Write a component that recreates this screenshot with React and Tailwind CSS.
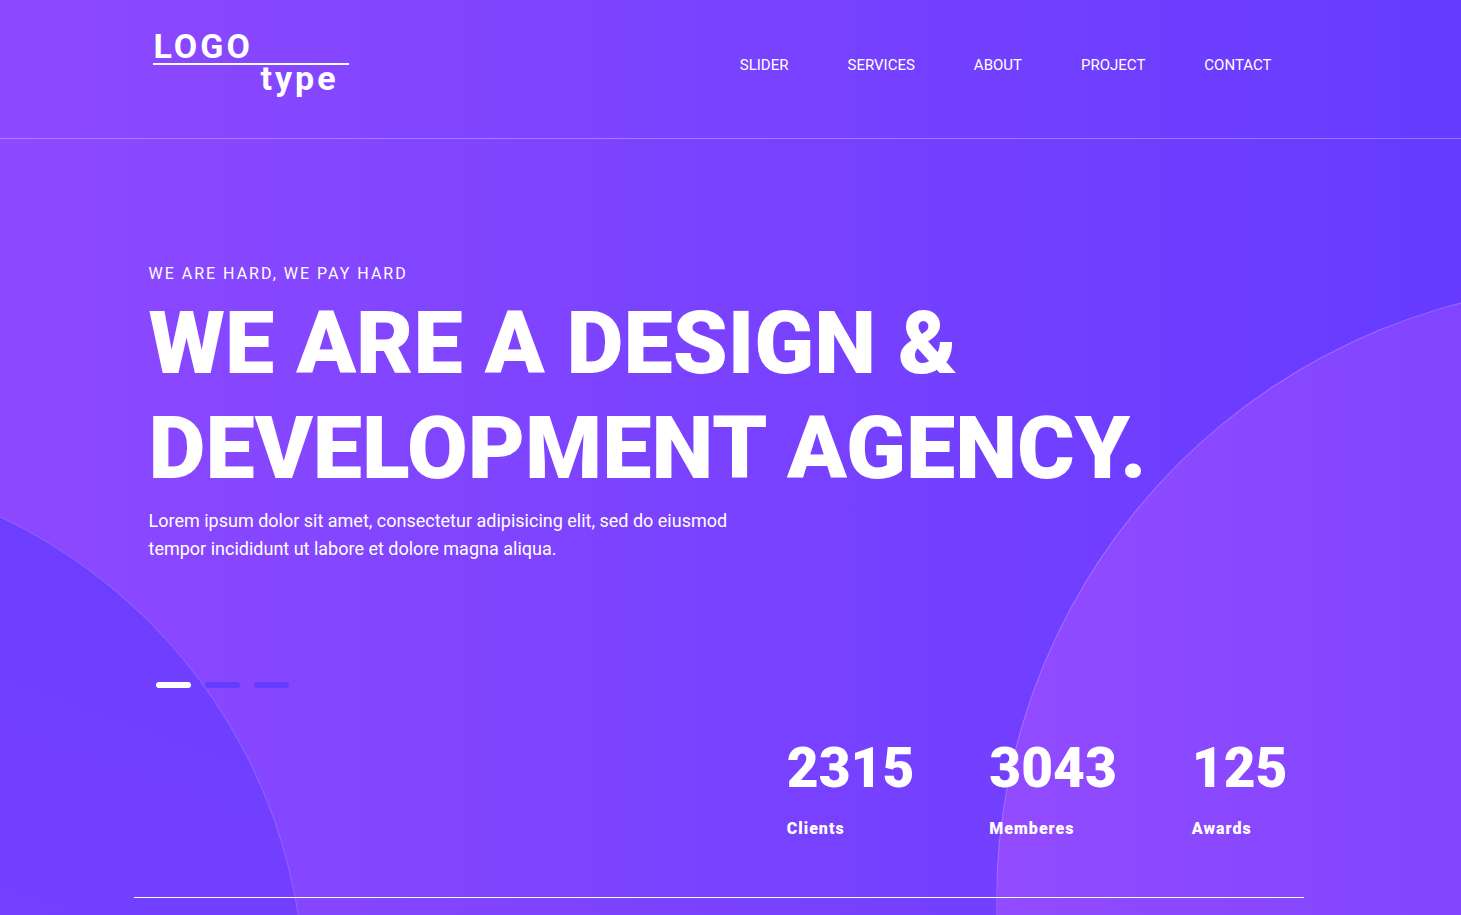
const links = ["Slider", "Services", "About", "Project", "Contact"];

const stats = [
  { value: "2315", label: "Clients" },
  { value: "3043", label: "Memberes" },
  { value: "125", label: "Awards" },
];

const slides = [1, 2, 3];

function Logo() {
  return (
    <a href="#" className="flex w-[196px] flex-col font-bold text-white">
      <span className="border-b-2 border-white pl-px text-[34px] leading-[33px] tracking-[3px]">LOGO</span>
      <span className="pr-[10px] text-right text-[34px] leading-[26px] tracking-[3px]">type</span>
    </a>
  );
}

function Header() {
  return (
    <header className="relative border-b border-white/30 pr-6">
      <div className="mx-auto flex h-[138px] max-w-[1170px] items-start justify-between pt-[30px] pr-8 pl-[19px]">
        <Logo />
        <nav className="flex gap-[59px] pt-6">
          {links.map((link) => (
            <a key={link} href={"#" + link.toLowerCase()} className="text-[15px] leading-[22px] text-white uppercase">
              {link}
            </a>
          ))}
        </nav>
      </div>
    </header>
  );
}

function Hero() {
  return (
    <section className="px-[15px] pt-[123px]">
      <p className="text-base leading-6 tracking-[2px] uppercase">We are hard, we pay hard</p>
      <h1 className="mt-1 max-w-[1100px] text-[88px] leading-[105px] font-black uppercase">
        We are a design &amp; development agency.
      </h1>
      <p className="mt-[7px] max-w-[600px] text-lg leading-7">
        Lorem ipsum dolor sit amet, consectetur adipisicing elit, sed do eiusmod tempor incididunt ut labore et dolore
        magna aliqua.
      </p>
      <div className="mt-[119px] flex gap-[14px] pl-[7px]">
        {slides.map((n) => (
          <button
            key={n}
            type="button"
            aria-label={"Slide " + n}
            className={n === 1 ? "h-1.5 w-[35px] rounded-full bg-white" : "h-1.5 w-[35px] rounded-full bg-[#653bff]"}
          />
        ))}
      </div>
    </section>
  );
}

function Stats() {
  return (
    <section className="mt-[47px] flex justify-end border-b border-white pb-[56px]">
      <dl className="flex gap-[75px] pr-4">
        {stats.map((s) => (
          <div key={s.label} className="flex flex-col-reverse">
            <dt className="mt-[15px] text-base leading-6 font-black tracking-[1px]">{s.label}</dt>
            <dd className="text-[55px] leading-[67px] font-black">{s.value}</dd>
          </div>
        ))}
      </dl>
    </section>
  );
}

export default function App() {
  return (
    <div className="relative min-h-screen overflow-hidden bg-[linear-gradient(90deg,#8d49ff,#663bff)] pb-[17px] font-['Roboto',sans-serif] text-white">
      <div className="absolute top-[283px] left-[996px] size-[1238px] rounded-full border border-white/20 bg-[linear-gradient(90deg,#924bff,#653bff)]" />
      <div className="absolute top-[466px] -left-[756px] size-[1061px] rounded-full border border-white/20 bg-[linear-gradient(200deg,#6b3dff,#8444ff)]" />
      <Header />
      <main className="relative pr-6">
        <div className="mx-auto max-w-[1170px]">
          <Hero />
          <Stats />
        </div>
      </main>
    </div>
  );
}
